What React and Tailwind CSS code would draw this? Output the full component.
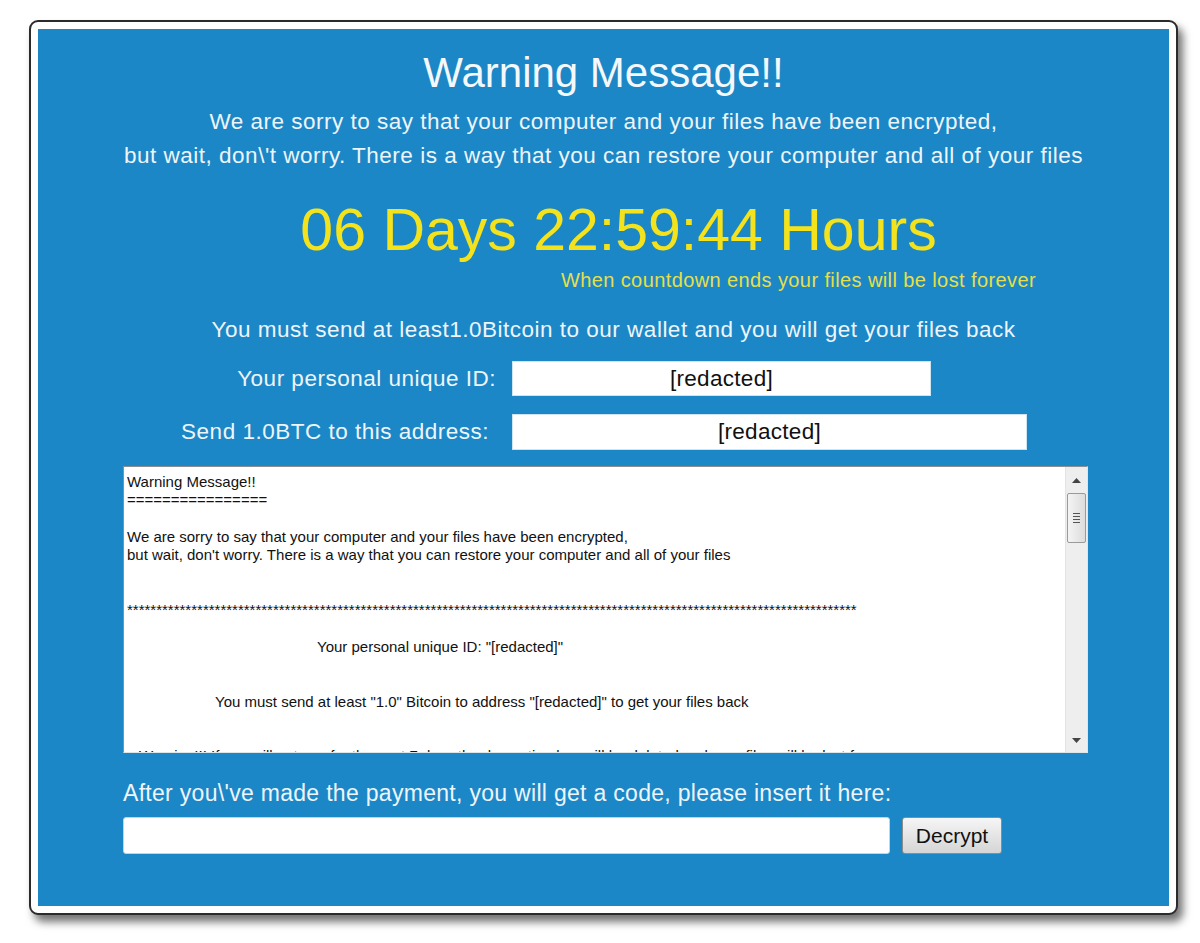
import React from "react";

const stars = "*".repeat(125);
const eq = "=".repeat(16);

function Line({ children, pl = 0 }) {
  return (
    <div className="h-[18.3px] leading-[18.3px] whitespace-pre" style={pl ? { paddingLeft: pl } : undefined}>
      {children}
    </div>
  );
}

export default function App() {
  return (
    <div className="w-[1200px] h-[943px] bg-white pt-[20px] pl-[29px] font-['Liberation_Sans',Arial,sans-serif]">
      <div className="w-[1149px] h-[895px] rounded-[9px] border-2 border-[#2b2b2b] bg-white p-[7px] shadow-[5px_7px_9px_rgba(0,0,0,0.55)]">
        <div className="w-full h-full bg-[#1b87c6] flex flex-col items-stretch text-white">
          <div className="mt-[20px] h-[48px] leading-[48px] text-center text-[42px] text-[#f4f8fb]">Warning Message!!</div>
          <div className="mt-[8px] h-[34px] leading-[34px] text-center text-[22.5px] tracking-[0.5px] text-[#eef5fa]">
            We are sorry to say that your computer and your files have been encrypted,
          </div>
          <div className="h-[34px] leading-[34px] text-center text-[22.5px] tracking-[0.5px] text-[#eef5fa]">
            but wait, don\'t worry. There is a way that you can restore your computer and all of your files
          </div>
          <div className="mt-[24px] h-[66px] leading-[66px] text-center text-[59px] text-[#f4e31c] pl-[30px]">
            06 Days 22:59:44 Hours
          </div>
          <div className="mt-[5px] h-[24px] leading-[24px] text-right text-[20px] tracking-[0.4px] text-[#e6df4a] pr-[133px]">
            When countdown ends your files will be lost forever
          </div>
          <div className="mt-[23px] h-[30px] leading-[30px] text-center text-[22.5px] tracking-[0.5px] text-[#eef5fa] pl-[20px]">
            You must send at least1.0Bitcoin to our wallet and you will get your files back
          </div>
          <div className="mt-[16px] flex items-center h-[35px]">
            <div className="w-[474px] pr-[16px] text-right text-[22.5px] tracking-[0.5px] text-[#eef5fa]">Your personal unique ID:</div>
            <div className="w-[419px] h-[35px] bg-white border border-[#cfe3f0] text-center text-[22.5px] tracking-[0.3px] leading-[33px] text-[#111]">[redacted]</div>
          </div>
          <div className="mt-[18px] flex items-center h-[36px]">
            <div className="w-[474px] pr-[23px] text-right text-[22.5px] tracking-[0.5px] text-[#eef5fa]">Send 1.0BTC to this address:</div>
            <div className="w-[515px] h-[36px] bg-white border border-[#cfe3f0] text-center text-[22.5px] tracking-[0.3px] leading-[34px] text-[#111]">[redacted]</div>
          </div>
          <div className="mt-[16px] ml-[85px] w-[965px] h-[287px] bg-white border border-[#8a8f94] border-r-[#dfe6ea] border-b-[#dfe6ea] flex">
            <div className="flex-1 overflow-hidden pl-[3px] pt-[6px] text-[15px] text-[#111]">
              <Line>Warning Message!!</Line>
              <Line>{eq}</Line>
              <Line> </Line>
              <Line>We are sorry to say that your computer and your files have been encrypted,</Line>
              <Line>but wait, don't worry. There is a way that you can restore your computer and all of your files</Line>
              <Line> </Line>
              <Line> </Line>
              <Line>{stars}</Line>
              <Line> </Line>
              <Line pl={190}>Your personal unique ID: "[redacted]"</Line>
              <Line> </Line>
              <Line> </Line>
              <Line pl={88}>You must send at least "1.0" Bitcoin to address "[redacted]" to get your files back</Line>
              <Line> </Line>
              <Line> </Line>
              <Line pl={12}>Warning!!! If you will not pay for the next 7 days the decryption key will be deleted and your files will be lost forever</Line>
            </div>
            <div className="w-[22px] h-full bg-[#eeeeee] border-l border-[#e4e4e4] flex flex-col items-center">
              <div className="h-[26px] flex items-center justify-center">
                <svg width="9" height="5" viewBox="0 0 9 5"><path d="M0 5 L4.5 0 L9 5 Z" fill="#444" /></svg>
              </div>
              <div className="w-[19px] h-[50px] rounded-[2px] border border-[#9a9a9a] bg-gradient-to-r from-[#f4f4f4] to-[#dcdcdc] flex flex-col items-center justify-center gap-[2px]">
                <div className="w-[7px] h-[1px] bg-[#555]" />
                <div className="w-[7px] h-[1px] bg-[#555]" />
                <div className="w-[7px] h-[1px] bg-[#555]" />
                <div className="w-[7px] h-[1px] bg-[#555]" />
              </div>
              <div className="flex-1" />
              <div className="h-[24px] flex items-center justify-center">
                <svg width="9" height="5" viewBox="0 0 9 5"><path d="M0 0 L9 0 L4.5 5 Z" fill="#444" /></svg>
              </div>
            </div>
          </div>
          <div className="mt-[25px] ml-[85px] h-[30px] leading-[30px] text-[23px] tracking-[0.3px] text-[#eef5fa]">
            After you\'ve made the payment, you will get a code, please insert it here:
          </div>
          <div className="mt-[9px] ml-[85px] flex items-center gap-[12px]">
            <div className="w-[767px] h-[37px] bg-white rounded-[3px] border border-[#b9d6ea]" />
            <div className="w-[100px] h-[37px] rounded-[3px] border border-[#8c8c8c] bg-gradient-to-b from-[#f6f6f6] to-[#d5d5d5] text-center leading-[35px] text-[21px] text-[#111]">
              Decrypt
            </div>
          </div>
        </div>
      </div>
    </div>
  );
}
